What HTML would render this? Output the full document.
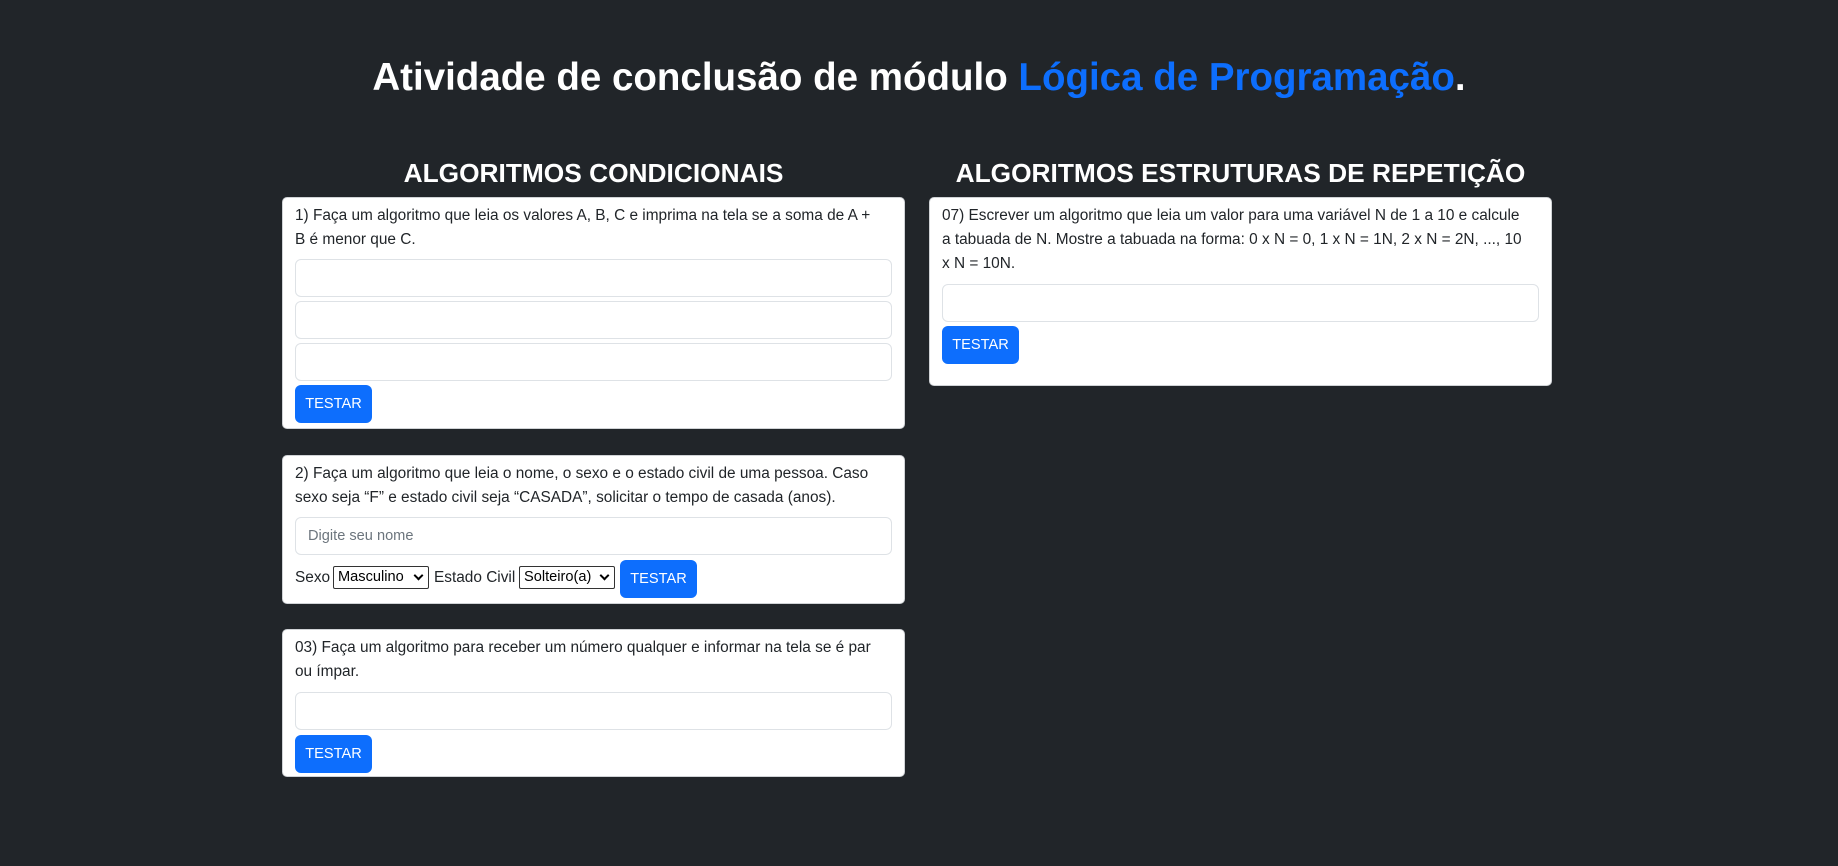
<!DOCTYPE html>
<html><head><meta charset="utf-8"><style>
*{box-sizing:border-box;margin:0;padding:0}
body{width:1838px;height:866px;background:#212529;font-family:"Liberation Sans",sans-serif;position:relative;overflow:hidden;color:#212529}
h1{position:absolute;left:0;width:1838px;top:54px;text-align:center;color:#fff;font-size:38.5px;font-weight:bold;line-height:48px}
h1 span{color:#0d6efd}
h3{position:absolute;color:#fff;font-size:26.3px;font-weight:bold;text-align:center;line-height:34px;top:156px}
.card{position:absolute;background:#fff;border:1px solid #d0d3d6;border-radius:5px}
.t{position:absolute;left:12px;font-size:15.4px;line-height:24px;white-space:nowrap;color:#212529}
.in{position:absolute;left:12px;right:12px;height:38px;border:1px solid #dee2e6;border-radius:6px;background:#fff}
.btn{position:absolute;left:12px;width:77px;height:38px;background:#0d6efd;color:#fff;border-radius:6px;font-size:14.6px;line-height:38px;text-align:center}
.sel{position:absolute;height:23px;border:1px solid #333;border-radius:2px;font-size:14.6px;line-height:21px;padding-left:4px;background:#fff;color:#000}
.sel:after{content:"";position:absolute;right:6px;top:5px;width:5px;height:5px;border-right:2px solid #000;border-bottom:2px solid #000;transform:rotate(45deg)}
</style></head><body>
<h1>Atividade de conclusão de módulo <span>Lógica de Programação</span>.</h1>
<h3 style="left:282px;width:623px">ALGORITMOS CONDICIONAIS</h3>
<h3 style="left:929px;width:623px">ALGORITMOS ESTRUTURAS DE REPETIÇÃO</h3>

<div class="card" style="left:282px;top:197px;width:623px;height:232px">
<div class="t" style="top:6px">1) Faça um algoritmo que leia os valores A, B, C e imprima na tela se a soma de A +<br>B é menor que C.</div>
<div class="in" style="top:61px"></div>
<div class="in" style="top:103px"></div>
<div class="in" style="top:145px"></div>
<div class="btn" style="top:187px">TESTAR</div>
</div>

<div class="card" style="left:282px;top:455px;width:623px;height:149px">
<div class="t" style="top:6px">2) Faça um algoritmo que leia o nome, o sexo e o estado civil de uma pessoa. Caso<br>sexo seja “F” e estado civil seja “CASADA”, solicitar o tempo de casada (anos).</div>
<div class="in" style="top:61px;color:#6c757d;font-size:14.6px;line-height:36px;padding-left:12px">Digite seu nome</div>
<div class="t" style="top:110px">Sexo</div>
<div class="sel" style="left:50px;top:110px;width:96px">Masculino</div>
<div class="t" style="top:110px;left:151px">Estado Civil</div>
<div class="sel" style="left:236px;top:110px;width:96px">Solteiro(a)</div>
<div class="btn" style="top:104px;left:337px">TESTAR</div>
</div>

<div class="card" style="left:282px;top:629px;width:623px;height:148px">
<div class="t" style="top:6px">03) Faça um algoritmo para receber um número qualquer e informar na tela se é par<br>ou ímpar.</div>
<div class="in" style="top:62px"></div>
<div class="btn" style="top:105px">TESTAR</div>
</div>

<div class="card" style="left:929px;top:197px;width:623px;height:189px">
<div class="t" style="top:6px">07) Escrever um algoritmo que leia um valor para uma variável N de 1 a 10 e calcule<br>a tabuada de N. Mostre a tabuada na forma: 0 x N = 0, 1 x N = 1N, 2 x N = 2N, ..., 10<br>x N = 10N.</div>
<div class="in" style="top:86px"></div>
<div class="btn" style="top:128px">TESTAR</div>
</div>
</body></html>
